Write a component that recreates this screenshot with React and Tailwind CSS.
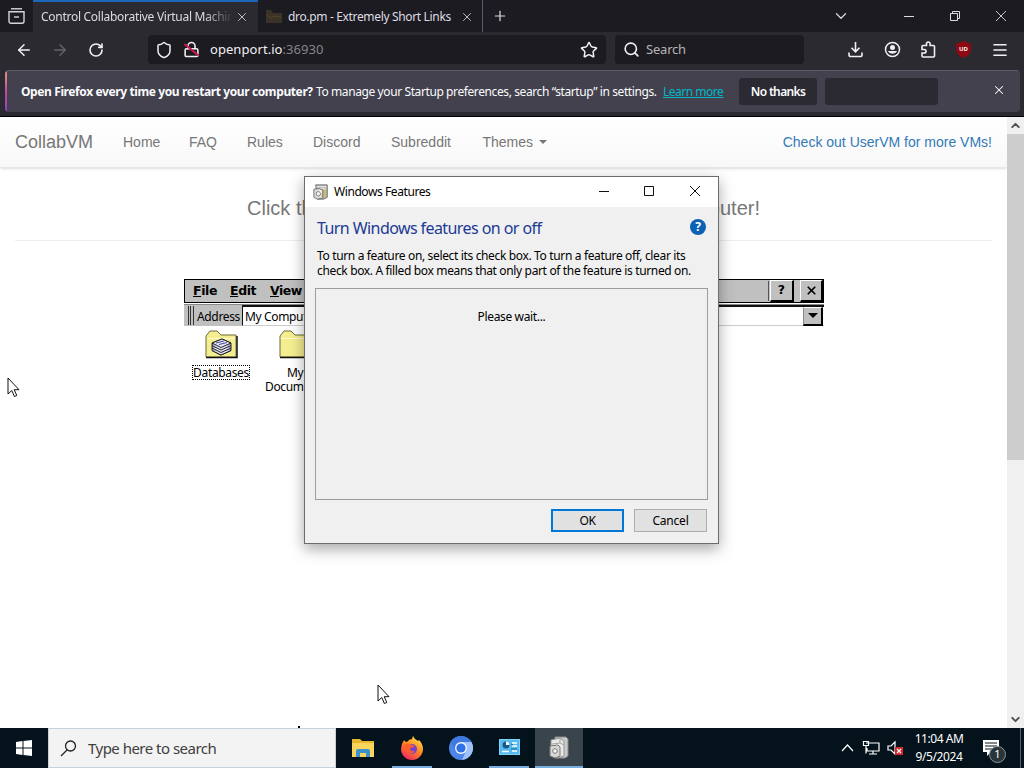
import {
  Search, Star, Shield, Lock, X, Plus, ChevronDown, ArrowLeft, ArrowRight,
  RotateCw, Menu,
} from 'lucide-react'

const NAV_LINKS = [
  { label: 'Home', width: 'w-[66px]' },
  { label: 'FAQ', width: 'w-[58px]' },
  { label: 'Rules', width: 'w-[66px]' },
  { label: 'Discord', width: 'w-[78px]' },
  { label: 'Subreddit', width: 'w-[91.5px]' },
]

function Cursor({ className }) {
  return (
    <svg className={className} width="13" height="21" viewBox="0 0 13 21">
      <path d="M1 1v16l3.8-3.5 2.6 6 2.4-1-2.6-5.8H12z" fill="#fff" stroke="#111" strokeWidth="1" />
    </svg>
  )
}

function TabStrip() {
  return (
    <div className="flex h-8 bg-[#1c1b22] text-[12px] text-[#dcdce0]">
      <div className="flex w-[33px] items-center justify-center">
        <svg width="17" height="16" viewBox="0 0 17 16" fill="none" stroke="#d5d5da" strokeWidth="1.4">
          <path d="M3 .8h11" />
          <path d="M1 3.8h15v9.5a2 2 0 0 1-2 2H3a2 2 0 0 1-2-2z" />
          <path d="M6 9h5" />
        </svg>
      </div>
      <div className="flex w-[225px] items-center border-t-2 border-[#1b66b8] bg-[#2b2a30] pl-2">
        <span className="w-[192px] overflow-hidden whitespace-nowrap tracking-[-0.28px] [mask-image:linear-gradient(to_right,black_85%,transparent)]">
          Control Collaborative Virtual Machin
        </span>
        <X className="ml-0.5 h-[14px] w-[14px] text-[#c9c9ce]" strokeWidth={1.6} />
      </div>
      <div className="flex w-[225px] items-center border-r border-[#5b5a63] pt-px pl-2">
        <svg width="16" height="13" viewBox="0 0 16 13">
          <path d="M0 0h5l2 3h9v10H0z" fill="#3a3226" />
          <path d="m1 5 4 3 4-2 6 1" stroke="#574729" fill="none" />
        </svg>
        <span className="ml-[6px] w-[172px] whitespace-nowrap tracking-[-0.34px]">dro.pm - Extremely Short Links</span>
        <X className="h-[14px] w-[14px] text-[#c9c9ce]" strokeWidth={1.6} />
      </div>
      <div className="flex flex-1 items-center pl-[9px]">
        <Plus className="h-4 w-4" strokeWidth={1.8} />
      </div>
      <div className="flex w-[193px] items-center">
        <ChevronDown className="ml-px h-[18px] w-[18px]" strokeWidth={1.6} />
        <span className="ml-[54px] h-px w-[10px] bg-[#dddde0]" />
        <svg className="ml-[35px]" width="12" height="12" viewBox="0 0 12 12" fill="none" stroke="#dddde0">
          <path d="M1.5 3.5h7v7h-7zM3.5 3.5v-2h7v7h-2" />
        </svg>
        <svg className="ml-[34px]" width="12" height="12" viewBox="0 0 12 12" stroke="#c8c8cc">
          <path d="m1 1 10 10M11 1 1 11" />
        </svg>
      </div>
    </div>
  )
}

function Toolbar() {
  return (
    <div className="flex h-[34px] items-center bg-[#2b2a30] pt-px text-[13px] text-[#f0f0f4]">
      <div className="flex w-[148px] items-center pl-[15px]">
        <ArrowLeft className="h-[18px] w-[18px]" strokeWidth={2} />
        <ArrowRight className="ml-[18px] h-[18px] w-[18px] text-[#65646b]" strokeWidth={1.8} />
        <RotateCw className="ml-[19px] h-4 w-4" strokeWidth={2.4} />
      </div>
      <div className="flex h-[29px] w-[458px] items-center rounded-sm bg-[#1c1b20] pl-[7px]">
        <Shield className="h-[18px] w-[18px]" strokeWidth={2} />
        <span className="relative ml-[10px]">
          <Lock className="h-[17px] w-[17px]" strokeWidth={2.2} />
          <svg className="absolute inset-0" width="17" height="17" viewBox="0 0 17 17">
            <path d="m1.500 3 14 11.500" stroke="#c71c4c" strokeWidth="2.200" />
          </svg>
        </span>
        <span className="ml-[10px] flex-1 pt-px tracking-[0.06px]">
          openport.io<span className="text-[#86858b]">:36930</span>
        </span>
        <Star className="mr-2 h-[18px] w-[18px]" strokeWidth={2} />
      </div>
      <div className="ml-[9px] flex h-[29px] w-[189px] items-center rounded-sm bg-[#1c1b20] pl-2 text-[#b5b5ba]">
        <Search className="h-[17px] w-[17px] text-[#f0f0f4]" strokeWidth={2.3} />
        <span className="ml-[6px] pt-px tracking-[-0.2px]">Search</span>
      </div>
      <div className="ml-[43px] flex items-center">
        <svg width="17" height="17" viewBox="0 0 17 17" fill="none" stroke="currentColor" strokeWidth="1.6">
          <path d="M8.5 1v9.5M4.5 6.8l4 4 4-4M2 11.5V14a1.5 1.5 0 0 0 1.5 1.5h10A1.5 1.5 0 0 0 15 14v-2.5" />
        </svg>
        <svg className="ml-5" width="17" height="17" viewBox="0 0 17 17">
          <circle cx="8.5" cy="8.5" r="7" fill="none" stroke="currentColor" strokeWidth="1.5" />
          <circle cx="8.5" cy="6.4" r="2.5" fill="currentColor" />
          <path d="M3.8 10h9.4a5.3 5.3 0 0 1-9.4 0z" fill="currentColor" />
        </svg>
        <svg className="ml-[19px]" width="17" height="17" viewBox="0 0 17 17" fill="none" stroke="currentColor" strokeWidth="1.6">
          <path d="M2 7.200V5.500a1 1 0 0 1 1-1h3.500V2.800a1.800 1.800 0 0 1 3.600 0v1.700h3.400a1 1 0 0 1 1 1V15a1 1 0 0 1-1 1H3a1 1 0 0 1-1-1v-3h2.300a1.700 1.700 0 0 0 0-3.500H2z" />
        </svg>
        <span className="relative ml-[18px] flex h-[17px] w-[17px] items-center justify-center text-[6px] font-bold">
          <svg className="absolute inset-0" width="17" height="17" viewBox="0 0 17 17">
            <path d="M8.500 0 16 3v6q-1 5-7.500 8Q2 14 1 9V3z" fill="#8f0912" />
          </svg>
          <span className="relative -mt-px">UD</span>
        </span>
        <Menu className="ml-[19px] h-[18px] w-[18px]" strokeWidth={2.2} />
      </div>
    </div>
  )
}

function StartupNotice() {
  return (
    <div className="h-[51px] border-b border-black bg-[#2b2a33] pt-1 pr-1 pl-[5px] text-[12px] text-[#fbfbfe]">
      <div className="flex h-[42px] overflow-hidden rounded-[4px] border-t border-[#5b5a66] bg-[#42414d]">
        <div className="w-[2px] bg-gradient-to-b from-[#d99a70] via-[#c2489b] to-[#8a42c4]" />
        <div className="flex flex-1 items-center pl-[14px] whitespace-nowrap">
          <span className="w-[295px] font-bold tracking-[-0.39px]">Open Firefox every time you restart your computer?</span>
          <span className="w-[347px] tracking-[-0.4px]">To manage your Startup preferences, search “startup” in settings.</span>
          <span className="w-[76px] tracking-[-0.5px] text-[#00b8ca] underline">Learn more</span>
          <button className="h-[27px] w-[78px] rounded-[3px] bg-[#2b2a33] font-semibold tracking-[-0.65px]">No thanks</button>
          <span className="ml-2 h-[27px] w-[113px] rounded-[3px] bg-[#2b2a33]" />
          <X className="mb-[3px] ml-[54px] h-[14px] w-[14px]" strokeWidth={1.8} />
        </div>
      </div>
    </div>
  )
}

function SiteNav() {
  return (
    <nav className="flex h-[51px] items-center border-b border-[#e7e7e7] bg-gradient-to-b from-white to-[#f8f8f8] px-[15px] text-[14px] text-[#777] shadow-sm">
      <span className="w-[108px] text-[18px]">CollabVM</span>
      {NAV_LINKS.map((link) => (
        <span key={link.label} className={link.width}>{link.label}</span>
      ))}
      <span className="flex flex-1 items-center gap-[6px]">
        Themes
        <svg width="8" height="4" viewBox="0 0 8 4"><path d="M0 0h8L4 4z" fill="#777" /></svg>
      </span>
      <span className="text-[#337ab7]">Check out UserVM for more VMs!</span>
    </nav>
  )
}

function FolderIcon({ database }) {
  return (
    <svg width="33" height="29" viewBox="0 0 33 29" className="shrink-0">
      <path d="M1 27V6l4-5h7l4 4h15v22z" fill="#f5ee90" stroke="#6f6a38" />
      <path d="M1 27.500h31V6" fill="none" stroke="#111" strokeWidth="1.500" />
      <path d="M2 8.500h28" stroke="#fffbd0" />
      {database && (
        <g stroke="#111" strokeWidth=".9">
          <path d="m7 20.500 9 4.500 10-4.500V13L17 9 7 13z" fill="#a9a8d4" />
          <path d="m7 20.500 9 4.500 10-4.500M7 18l9 4.500L26 18M7 15.500l9 4.500 10-4.500M7 13l9 4.500L26 13 17 9z" fill="#e4e4f6" />
          <path d="m11 13 8-2M14 14.500l8-2" stroke="#393991" />
        </g>
      )}
    </svg>
  )
}

function RemoteScreen() {
  return (
    <div className="ml-[184px] w-[640px] text-[12px] text-black">
      <div className="flex h-[24px] items-center border border-black bg-[#c0c0c0] font-['DejaVu_Sans'] text-[12.5px] font-bold">
        <span className="w-[45px] pl-[8px] tracking-[-0.4px]"><u>F</u>ile</span>
        <span className="w-[40px] tracking-[-0.4px]"><u>E</u>dit</span>
        <span className="flex-1 tracking-[-0.5px]"><u>V</u>iew</span>
        <span className="mr-[1px] h-5 w-px bg-[#555]" />
        <span className="flex h-[22px] w-[24px] items-center justify-center border border-t-white border-r-2 border-r-black border-b-2 border-b-black border-l-white">?</span>
        <span className="ml-[6px] flex h-[22px] w-[23px] items-center justify-center border border-t-white border-r-2 border-r-black border-b-2 border-b-black border-l-white">
          <X className="h-[13px] w-[13px]" strokeWidth={3.2} />
        </span>
      </div>
      <div className="mt-px flex h-[22px] items-stretch border-t border-[#888] tracking-[-0.35px]">
        <div className="flex w-[58px] items-center bg-[#c0c0c0] pl-[4px]">
          <span className="mr-[2px] h-[19px] w-[3px] border-x border-[#333]" />
          <span className="mr-[3px] h-[19px] w-px bg-[#333]" />
          <span className="pt-[2px]">Address</span>
        </div>
        <div className="flex flex-1 items-center border-t-2 border-b border-l border-[#111] border-b-[#ccc] pl-[2px] whitespace-nowrap">
          <span className="w-[59px] overflow-hidden pt-px">My Comput</span>
          <span className="flex-1" />
          <span className="mr-px flex h-[19px] w-[20px] items-center justify-center border border-r-2 border-b-2 border-black border-t-white border-l-[#888] bg-[#c0c0c0]">
            <svg width="10" height="5" viewBox="0 0 10 5"><path d="M0 0h10L5 5z" /></svg>
          </span>
        </div>
      </div>
      <div className="flex pt-1 pl-[9px] leading-[14px] tracking-[-0.35px]">
        <div className="flex w-[56px] flex-col items-center">
          <FolderIcon database />
          <span className="mt-[6px] border border-dotted border-black leading-[13px]">Databases</span>
        </div>
        <div className="ml-[16px] flex w-[40px] flex-col">
          <span className="ml-[14px] w-[26px] overflow-hidden"><FolderIcon /></span>
          <span className="mt-[7px] ml-[22px]">My</span>
          <span className="w-[40px] overflow-hidden">Docum</span>
        </div>
      </div>
    </div>
  )
}

function FeatureIcon({ className }) {
  return (
    <svg className={className} viewBox="0 0 18 18">
      <path d="M3 1h13v14l-4 2H5z" fill="#b9bab8" stroke="#60625f" />
      <path d="M4 3h11M5 5.500h10" stroke="#f5f5f5" />
      <path d="M10 6h4v9h-4z" fill="#cbbd62" />
      <path d="m1 6 6-1 4 2v9l-6 1-4-2z" fill="#deded9" stroke="#666" />
      <circle cx="6" cy="11" r="2.500" fill="#f5f5f5" stroke="#777" />
      <path d="m7 8 2-1v3" stroke="#fff" fill="none" />
    </svg>
  )
}

function TaskbarFeatureIcon() {
  return (
    <svg width="20" height="23" viewBox="0 0 20 23">
      <path d="M6 1h11l2 2v17l-3 2H6z" fill="#c9cac9" stroke="#888" />
      <path d="m2 4 9-2 4 3v15l-7 2-6-3z" fill="#e9eae8" stroke="#929492" />
      <path d="M11 2v5l4 2M3 8l8-1" stroke="#a3a5a3" fill="none" />
      <path d="m1 10 8-1 2 2v9l-5 2-5-2z" fill="#d7d8d6" stroke="#777" />
      <circle cx="6" cy="15" r="2.300" fill="#f8f8f8" stroke="#777" />
    </svg>
  )
}

function FeaturesDialog() {
  return (
    <div className="absolute top-[176px] left-[304px] flex h-[368px] w-[415px] flex-col border border-[#6c6c6c] bg-[#f0f0f0] text-[12px] text-black shadow-[0_5px_14px_rgba(0,0,0,0.35)]">
      <div className="flex h-[30px] shrink-0 items-center bg-white pl-2">
        <FeatureIcon className="h-4 w-4" />
        <span className="ml-[5px] flex-1 tracking-[-0.42px]">Windows Features</span>
        <svg width="106" height="12" viewBox="0 0 106 12" fill="none" stroke="#111" className="mr-[13px] mb-[2px]">
          <path d="M0 6.500h10M45.500 1.500h9v9h-9zM91 1l10 10M101 1 91 11" />
        </svg>
      </div>
      <div className="flex items-center pt-[9px] pr-3 pl-3">
        <span className="flex-1 text-[16px] leading-[24px] tracking-[-0.58px] text-[#1c3a94]">Turn Windows features on or off</span>
        <span className="mb-[3px] flex h-4 w-4 items-center justify-center rounded-full bg-[#0c61b5] text-[12px] font-bold text-white">?</span>
      </div>
      <p className="mt-[8px] pl-3 leading-[15px] tracking-[-0.35px] whitespace-nowrap">
        To turn a feature on, select its check box. To turn a feature off, clear its<br />
        check box. A filled box means that only part of the feature is turned on.
      </p>
      <div className="mx-[10px] mt-[10px] h-[212px] border border-[#999ca0] pt-[19px] text-center tracking-[-0.35px]">Please wait...</div>
      <div className="mt-[9px] flex justify-end gap-[10px] pr-[11px]">
        <button className="h-[23px] w-[73px] border-2 border-[#0078d7] bg-[#e1e1e1] tracking-[-0.3px]">OK</button>
        <button className="h-[23px] w-[73px] border border-[#adadad] bg-[#e1e1e1] tracking-[-0.2px]">Cancel</button>
      </div>
    </div>
  )
}

function Taskbar() {
  return (
    <div className="flex h-10 bg-[#04121b] text-[12px] text-white">
      <div className="flex w-12 items-center justify-center">
        <svg width="16" height="16" viewBox="0 0 16 16" fill="#fff">
          <path d="m0 2 6.500-.9v6.400H0zm7.500-1L16 0v7.500H7.500zM0 8.500h6.500v6.400L0 14zm7.500 0H16V16l-8.500-1z" />
        </svg>
      </div>
      <div className="flex w-[288px] items-center border border-[#c5d0d8] bg-[#f3f3f3] pl-[11px] text-[15px] text-[#404040]">
        <svg width="17" height="17" viewBox="0 0 17 17" fill="none" stroke="#222" strokeWidth="1.300">
          <circle cx="10.500" cy="6" r="5" /><path d="m7 10-6 6" />
        </svg>
        <span className="ml-[11px] tracking-[-0.52px]">Type here to search</span>
      </div>
      <div className="flex w-[53px] items-center justify-center">
        <svg width="22" height="20" viewBox="0 0 22 20">
          <path d="M0 1h8l2 2h12v16H0z" fill="#e9b62d" />
          <path d="M0 5h22v14H0z" fill="#fbd45e" />
          <path d="M4 19v-6q0-2 2-2h10q2 0 2 2v6h-4v-4H8v4z" fill="#3a93cf" />
        </svg>
      </div>
      <div className="ml-[3px] flex w-10 items-center justify-center border-b-2 border-[#76aee0]">
        <svg width="24" height="24" viewBox="0 0 24 24" className="mt-px">
          <defs>
            <linearGradient id="fox" x1=".8" y1="0" x2=".2" y2="1">
              <stop stopColor="#ffe84b" /><stop offset=".45" stopColor="#ff8b20" /><stop offset="1" stopColor="#ef1f66" />
            </linearGradient>
          </defs>
          <path d="M4 4q1 2 3 2 2-3 5-3l1-3q2 4 5 5l1-1q4 4 4 9a11 11 0 0 1-22 0q0-5 3-9z" fill="url(#fox)" />
          <circle cx="12" cy="13" r="5" fill="#7542d3" />
          <path d="M4 9q4-3 8 0l3 1q-2 2-5 2 0 4 5 3-4 5-9 0-2-3-2-6z" fill="#fa6028" />
        </svg>
      </div>
      <div className="flex w-[57px] items-center justify-center">
        <svg width="24" height="24" viewBox="0 0 24 24">
          <circle cx="12" cy="12" r="12" fill="#4d86e8" />
          <path d="M12 6h10.400a12 12 0 0 1-9.400 18l4-9z" fill="#9fc2fa" />
          <path d="M1.600 6a12 12 0 0 1 20.800 0H12L6 14z" fill="#3f78df" />
          <circle cx="12" cy="12" r="6" fill="#f2f6ff" /><circle cx="12" cy="12" r="4.600" fill="#2f72e8" />
        </svg>
      </div>
      <div className="flex w-10 items-center justify-center border-b-2 border-[#76aee0]">
        <svg width="21" height="16" viewBox="0 0 21 16">
          <path d="M0 0h21v16H0z" fill="#7bd4f8" /><path d="M1 1h19v14H1z" fill="#58baf0" />
          <circle cx="7" cy="6" r="3.500" fill="#185888" /><path d="M7 6V2.500A3.500 3.500 0 0 1 10.500 6z" fill="#fff" />
          <path d="M3 12.500h7M13 4h5M13 7h5M13 12h5" stroke="#fff" strokeWidth="1.500" />
          <path d="m12 5 2 1M12 10h6" stroke="#17629a" />
        </svg>
      </div>
      <div className="ml-[6px] flex w-12 items-center justify-center border-b-2 border-[#76aee0] bg-[#3a444c]">
        <TaskbarFeatureIcon />
      </div>
      <div className="flex flex-1 items-center justify-end pr-[9px]">
        <svg width="62" height="16" viewBox="0 0 62 16" fill="none" stroke="#fff" strokeWidth="1.200">
          <path d="m1 11 5.500-6L12 11M25 3h13v8H26V8M22.500 1.500h5v4h-5zM25 5.500v8M32 11v3M28 14h8M47 6h3l4-4v12l-4-4h-3z" />
          <path d="M54 7h8v8h-8z" fill="#d5262e" stroke="none" /><path d="m56 9 4 4m0-4-4 4" />
        </svg>
      </div>
      <div className="flex w-[54px] flex-col items-center justify-center leading-[18px] whitespace-nowrap">
        <span className="tracking-[-0.45px]">11:04 AM</span>
        <span className="tracking-[-0.4px]">9/5/2024</span>
      </div>
      <div className="flex w-[54px] items-center pl-[16px]">
        <span className="relative">
          <svg width="18" height="18" viewBox="0 0 18 18">
            <path d="M1 1h16v12H9l-4 4v-4H1z" fill="#fff" /><path d="M3 4h12M3 7h12M3 10h8" stroke="#04121b" />
          </svg>
          <span className="absolute top-[7px] left-[7px] flex h-[17px] w-[17px] items-center justify-center rounded-full border border-[#8c969c] bg-[#29343b] text-[11px]">1</span>
        </span>
      </div>
      <div className="w-1 border-l border-[#58636b]" />
    </div>
  )
}

export default function App() {
  return (
    <div className="relative flex h-[768px] w-[1024px] flex-col overflow-hidden bg-white font-['Noto_Sans',sans-serif]">
      <TabStrip />
      <Toolbar />
      <StartupNotice />
      <div className="flex min-h-0 flex-1">
        <main className="w-[1007px]">
          <div className="font-['Liberation_Sans',sans-serif]">
            <SiteNav />
            <div className="mx-[15px] flex h-[73px] justify-between border-b border-[#eee] px-[232px] pt-[25px] text-[20px] leading-[30px] text-[#777]">
              <span>Click the</span>
              <span>computer!</span>
            </div>
          </div>
          <div className="pt-[38px]">
            <RemoteScreen />
          </div>
        </main>
        <div className="flex w-[17px] flex-col items-center bg-[#f0f0f0]">
          <ChevronDown className="h-[17px] w-[13px] shrink-0 rotate-180 text-[#505050]" strokeWidth={3.5} />
          <div className="h-[326px] w-full bg-[#cdcdcd]" />
          <div className="flex-1" />
          <ChevronDown className="h-[17px] w-[13px] shrink-0 text-[#505050]" strokeWidth={3.5} />
        </div>
      </div>
      <Taskbar />
      <FeaturesDialog />
      <Cursor className="absolute top-[377px] left-[7px]" />
      <Cursor className="absolute top-[684px] left-[377px]" />
      <span className="absolute top-[726px] left-[298px] h-[2px] w-[2px] bg-black" />
    </div>
  )
}
